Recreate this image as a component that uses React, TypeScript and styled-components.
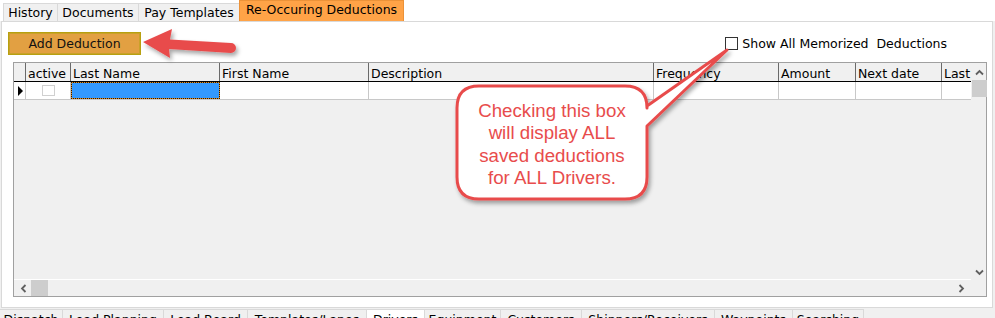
import React from 'react';
import styled, { createGlobalStyle } from 'styled-components';

const GlobalStyle = createGlobalStyle`
  html, body {
    margin: 0;
    padding: 0;
    background: #ffffff;
  }
  body {
    font-family: 'DejaVu Sans', Verdana, sans-serif;
    font-size: 12px;
    color: #000;
  }
`;

const Page = styled.div`
  position: relative;
  width: 995px;
  height: 318px;
  overflow: hidden;
  display: flex;
  flex-direction: column;
  background: #f0f0f0;
  & > * {
    flex-shrink: 0;
  }
`;

const TopTabBar = styled.div`
  height: 21px;
  display: flex;
  align-items: flex-end;
  padding-left: 4px;
  background: #ffffff;
`;

const TopTab = styled.div<{ $active?: boolean; $w: number }>`
  box-sizing: border-box;
  width: ${(p) => p.$w}px;
  height: ${(p) => (p.$active ? 21 : 18)}px;
  display: flex;
  align-items: center;
  justify-content: center;
  font-size: 12.5px;
  padding-bottom: ${(p) => (p.$active ? 3 : 0)}px;
  background: ${(p) => (p.$active ? '#ffa347' : '#f0f0f0')};
  border: 1px solid ${(p) => (p.$active ? '#ec9238' : '#d9d9d9')};
  border-bottom: none;
  margin-left: -1px;
  white-space: nowrap;
`;

const Panel = styled.div`
  box-sizing: border-box;
  width: 992px;
  height: 287px;
  margin-left: 1px;
  background: #ffffff;
  border: 1px solid #d9d9d9;
  display: flex;
  flex-direction: column;
`;

const Toolbar = styled.div`
  display: flex;
  align-items: center;
  justify-content: space-between;
  margin-top: 10px;
  padding: 0 45px 0 6px;
`;

const AddButton = styled.button`
  box-sizing: border-box;
  width: 133px;
  height: 23px;
  background: #e2a042;
  border: 1px solid #b8a010;
  box-shadow: inset 0 0 0 1px #c9a12a;
  font-family: inherit;
  font-size: 12.5px;
  color: #111;
  padding: 0;
`;

const CheckLabel = styled.label`
  display: flex;
  align-items: center;
  gap: 4px;
  font-size: 12.5px;
  white-space: pre;
`;

const CheckBox = styled.span`
  box-sizing: border-box;
  width: 13px;
  height: 13px;
  border: 1px solid #333;
  background: #fff;
`;

const Grid = styled.div`
  box-sizing: border-box;
  margin: 7px 5px 0 11px;
  height: 235px;
  border: 1px solid #a0a0a0;
  background: #f0f0f0;
  display: grid;
  grid-template-columns: 957px 1fr;
  grid-template-rows: 216px 1px 16px;
`;

const DataArea = styled.div`
  grid-column: 1;
  grid-row: 1;
  overflow: hidden;
  background: #f0f0f0;
`;

const Row = styled.div<{ $header?: boolean }>`
  display: grid;
  grid-template-columns: 12px 45px 149px 149px 285px 125px 77px 86px 29px;
  height: ${(p) => (p.$header ? 19 : 18)}px;
  background: ${(p) => (p.$header ? '#f0f0f0' : '#ffffff')};
  border-bottom: 1px solid ${(p) => (p.$header ? '#000' : '#c8c8c8')};
  box-sizing: border-box;
`;

const HeadCell = styled.div`
  box-sizing: border-box;
  border-right: 1px solid #6a6a6a;
  padding: 3px 0 0 2px;
  font-size: 12.5px;
  white-space: nowrap;
  overflow: hidden;
  &:last-child {
    border-right: none;
  }
`;

const Cell = styled.div<{ $selected?: boolean }>`
  box-sizing: border-box;
  border-right: 1px solid #c8c8c8;
  display: flex;
  align-items: center;
  justify-content: center;
  &:last-child {
    border-right: none;
  }
  ${(p) =>
    p.$selected &&
    `
    border: 1px dotted #2a1800;
    background: linear-gradient(#3399ff, #3399ff) padding-box, #e08a20 border-box;
  `}
`;

const Indicator = styled.div`
  width: 0;
  height: 0;
  border-top: 5px solid transparent;
  border-bottom: 5px solid transparent;
  border-left: 5px solid #000;
  margin-left: 1px;
`;

const CellCheck = styled.span`
  box-sizing: border-box;
  width: 13px;
  height: 11px;
  border: 1px solid #d0d0d0;
  background: #fff;
`;

const VScroll = styled.div`
  grid-column: 2;
  grid-row: 1 / 3;
  display: flex;
  flex-direction: column;
  align-items: center;
  padding-top: 1px;
`;

const Thumb = styled.div<{ $h?: boolean }>`
  background: #cdcdcd;
  width: ${(p) => (p.$h ? 17 : 15)}px;
  height: ${(p) => (p.$h ? 16 : 17)}px;
`;

const ArrowBtn = styled.div`
  width: 16px;
  height: 16px;
  display: flex;
  align-items: center;
  justify-content: center;
`;

const Spacer = styled.div`
  flex: 1;
`;

const WhiteLine = styled.div`
  grid-column: 1;
  grid-row: 2;
  background: #ffffff;
`;

const HScroll = styled.div`
  grid-column: 1 / 3;
  grid-row: 3;
  display: flex;
  align-items: center;
  padding: 0 18px 0 1px;
`;

const BottomTabBar = styled.div`
  display: flex;
  margin-top: 1px;
`;

const BottomTab = styled.div<{ $active?: boolean; $w: number }>`
  box-sizing: border-box;
  width: ${(p) => p.$w}px;
  height: 20px;
  padding-top: 2px;
  text-align: center;
  font-size: 12.5px;
  background: ${(p) => (p.$active ? '#ffffff' : '#f0f0f0')};
  border: 1px solid #d9d9d9;
  border-left: none;
  white-space: nowrap;
`;

const Overlay = styled.svg`
  position: absolute;
  left: 0;
  top: 0;
  pointer-events: none;
`;

const CalloutText = styled.div`
  position: absolute;
  left: 457px;
  top: 88px;
  width: 190px;
  height: 113px;
  display: flex;
  align-items: center;
  justify-content: center;
  text-align: center;
  font-family: 'Liberation Sans', Arial, sans-serif;
  font-size: 18.7px;
  line-height: 22.3px;
  color: #e84c4c;
  pointer-events: none;
`;

const Chevron = ({ dir }: { dir: 'up' | 'down' | 'left' | 'right' }) => {
  const rot = { up: 0, right: 90, down: 180, left: 270 }[dir];
  return (
    <svg width="9" height="9" viewBox="0 0 9 9">
      <path
        d="M1 6.5 L4.5 3 L8 6.5"
        fill="none"
        stroke="#606060"
        strokeWidth="1.8"
        transform={`rotate(${rot} 4.5 4.5)`}
      />
    </svg>
  );
};

const columns = ['', 'active', 'Last Name', 'First Name', 'Description', 'Frequency', 'Amount', 'Next date', 'Last'];

const topTabs = [
  { label: 'History', w: 55 },
  { label: 'Documents', w: 82 },
  { label: 'Pay Templates', w: 102 },
  { label: 'Re-Occuring Deductions', w: 165, active: true },
];

const bottomTabs = [
  { label: 'Dispatch', w: 63 },
  { label: 'Load Planning', w: 101 },
  { label: 'Load Board', w: 84 },
  { label: 'Templates/Lanes', w: 119 },
  { label: 'Drivers', w: 58, active: true },
  { label: 'Equipment', w: 76 },
  { label: 'Customers', w: 81 },
  { label: 'Shippers/Receivers', w: 133 },
  { label: 'Waypoints', w: 78 },
  { label: 'Searching', w: 71 },
];

const App = () => {
  return (
    <Page>
      <GlobalStyle />
      <TopTabBar>
        {topTabs.map((t) => (
          <TopTab key={t.label} $w={t.w} $active={t.active}>
            {t.label}
          </TopTab>
        ))}
      </TopTabBar>
      <Panel>
        <Toolbar>
          <AddButton>Add Deduction</AddButton>
          <CheckLabel>
            <CheckBox />
            {'Show All Memorized  Deductions'}
          </CheckLabel>
        </Toolbar>
        <Grid>
          <DataArea>
            <Row $header>
              {columns.map((c, i) => (
                <HeadCell key={i}>{c}</HeadCell>
              ))}
            </Row>
            <Row>
              <Cell>
                <Indicator />
              </Cell>
              <Cell>
                <CellCheck />
              </Cell>
              <Cell $selected />
              <Cell />
              <Cell />
              <Cell />
              <Cell />
              <Cell />
              <Cell />
            </Row>
          </DataArea>
          <VScroll>
            <ArrowBtn>
              <Chevron dir="up" />
            </ArrowBtn>
            <Thumb />
            <Spacer />
            <ArrowBtn>
              <Chevron dir="down" />
            </ArrowBtn>
          </VScroll>
          <WhiteLine />
          <HScroll>
            <ArrowBtn>
              <Chevron dir="left" />
            </ArrowBtn>
            <Thumb $h />
            <Spacer />
            <ArrowBtn>
              <Chevron dir="right" />
            </ArrowBtn>
          </HScroll>
        </Grid>
      </Panel>
      <BottomTabBar>
        {bottomTabs.map((t) => (
          <BottomTab key={t.label} $w={t.w} $active={t.active}>
            {t.label}
          </BottomTab>
        ))}
      </BottomTabBar>

      <Overlay width="995" height="318">
        <defs>
          <filter id="shadow" x="-20%" y="-20%" width="150%" height="160%">
            <feDropShadow dx="2" dy="3" stdDeviation="2" floodColor="#000" floodOpacity="0.35" />
          </filter>
        </defs>
        <path
          d="M143 42 L172 29 L170 39.5 L231 43 A5 5 0 0 1 231 53 L169 49 L170 58 Z"
          fill="#e84c4c"
          filter="url(#shadow)"
        />
        <path
          d="M479 86 L625 86 Q647 86 647 108 L647 106 L727 50 L647 126 L647 177 Q647 199 625 199 L479 199 Q457 199 457 177 L457 108 Q457 86 479 86 Z"
          fill="#ffffff"
          stroke="#e84c4c"
          strokeWidth="3"
          strokeLinejoin="round"
          filter="url(#shadow)"
        />
      </Overlay>
      <CalloutText>
        Checking this box
        <br />
        will display ALL
        <br />
        saved deductions
        <br />
        for ALL Drivers.
      </CalloutText>
    </Page>
  );
};

export default App;
